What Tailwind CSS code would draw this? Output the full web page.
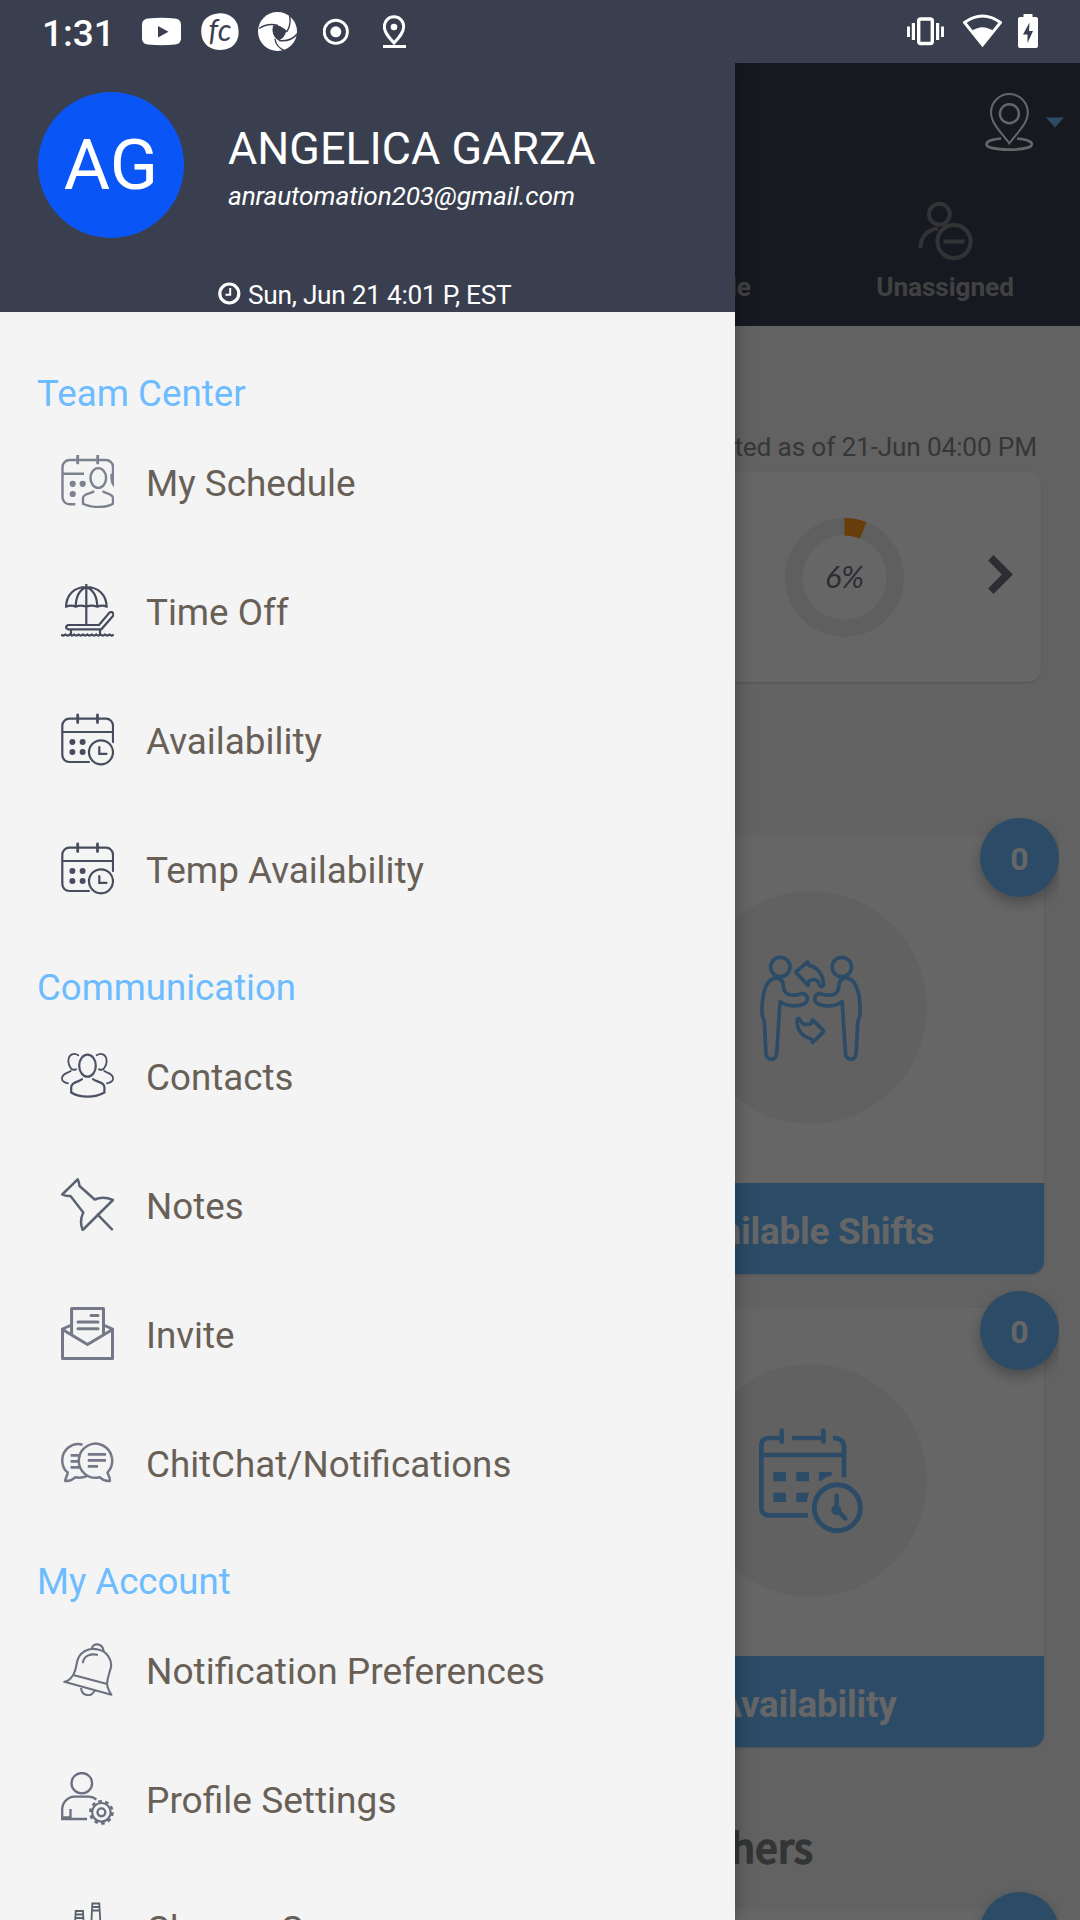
<!DOCTYPE html>
<html lang="en">
<head>
<meta charset="utf-8">
<title>Team Center</title>
<script src="https://cdn.jsdelivr.net/npm/@tailwindcss/browser@4"></script>
</head>
<body class="font-['Roboto',sans-serif]">
<svg class="hidden">
  <symbol id="calendar-clock" viewBox="0 0 53 53">
    <g fill="none" stroke="currentColor" stroke-width="2.200" stroke-linecap="round">
      <path d="M28 49H8.300a7 7 0 0 1-7-7V12.700a7 7 0 0 1 7-7H45a7 7 0 0 1 7 7V29M1.300 19H52"/>
      <path d="M16.700 2V9.500M36.500 2V9.500" stroke-width="2.800"/>
      <circle cx="40" cy="39.300" r="12"/>
      <path d="M38.300 34v6.800H45.500"/>
    </g>
    <g fill="currentColor"><circle cx="11.400" cy="29" r="3"/><circle cx="21.600" cy="29" r="3"/><circle cx="11.400" cy="39" r="3"/><circle cx="21.600" cy="39" r="3"/></g>
  </symbol>
</svg>
<div class="flex flex-col w-[1080px] h-[1920px] overflow-hidden bg-[#3a3f4f]">

  <!-- Status bar -->
  <div class="flex h-[63px] shrink-0 text-white">
    <span class="w-[100px] ml-[42px] text-[37px] leading-[67px] font-medium">1:31</span>
    <svg class="w-[39px] h-[63px]" viewBox="142 0 39 63"><path d="M148 18.500q13.500-1.500 27 0 5.500.5 6 5.500.5 7.500 0 15-.5 5-6 5.500-13.500 1.500-27 0-5.500-.5-6-5.500-.5-7.500 0-15 .5-5 6-5.500z" fill="currentColor"/><path d="M158 26v11.500l10.500-5.700z" fill="#3a3f4f"/></svg>
    <svg class="w-[38px] h-[63px] ml-5" viewBox="201 0 38 63"><path d="M218 13.500c9-1 16 3 19.500 11 2.500 9 1 17-6 22.500-7 4-16 4-22.500 0-7-5-8.500-12-7.500-20 1.500-8 8-13 16.500-13.500z" fill="currentColor"/><text x="208.500" y="41" font-family="Lato" font-style="italic" font-size="30" fill="#3a3f4f">fc</text></svg>
    <svg class="w-[39px] h-[63px] ml-[19px]" viewBox="258 0 39 63"><circle cx="277.500" cy="31.500" r="19.500" fill="currentColor"/><g fill="none" stroke="#3a3f4f" stroke-width="1.400"><path d="M259 28.500q9-6 19-3M289.500 15q2 10-3 17M297 34q-6 8-18 6.500M285 51q-9-4-10-12"/></g><path d="M273 25.500q7-1 13.500 5-2 8-8 10-8-5-5.500-15z" fill="#3a3f4f"/></svg>
    <svg class="w-[26px] h-[63px] ml-[26px]" viewBox="323 0 26 63"><circle cx="335.800" cy="31.800" r="11.600" fill="none" stroke="currentColor" stroke-width="2.900"/><circle cx="335.800" cy="31.800" r="5.500" fill="currentColor"/></svg>
    <svg class="w-[24px] h-[63px] ml-[34px]" viewBox="383 0 24 63"><path d="M394 43C388 36.500 384.300 32 384.300 26.500a9.700 9.700 0 0 1 19.400 0C403.700 32 400 36.500 394 43z" fill="none" stroke="currentColor" stroke-width="2.900"/><circle cx="394" cy="27" r="3.300" fill="currentColor"/><path d="M383 46.500h23" stroke="currentColor" stroke-width="3"/></svg>
    <svg class="w-[37px] h-[63px] ml-auto" viewBox="907 0 37 63"><g fill="none" stroke="currentColor"><rect x="918.700" y="19" width="13.600" height="24.500" rx="2" stroke-width="3.400"/><path d="M913.400 23v17M937.600 23v17" stroke-width="3.200"/><path d="M908.500 26.500v10.500M942.500 26.500v10.500" stroke-width="2.900"/></g></svg>
    <svg class="w-[39px] h-[63px] ml-[19px]" viewBox="963 0 39 63"><path d="M964.500 22.500q18-13 36 0L982.500 45z" fill="none" stroke="currentColor" stroke-width="2.900"/><path d="M972 31q10.500-7.500 21 0L982.500 45z" fill="currentColor"/></svg>
    <svg class="w-[20px] h-[63px] ml-4 mr-[42px]" viewBox="1018 0 20 63"><path d="M1023.500 14h9v3h3.500a2 2 0 0 1 2 2v27a2 2 0 0 1-2 2h-16a2 2 0 0 1-2-2V19a2 2 0 0 1 2-2h3.500z" fill="currentColor"/><path d="M1029.500 22.500l-6.500 12h4.500v8.500l5.500-12h-4z" fill="#3a3f4f"/></svg>
  </div>

  <div class="relative flex-1 overflow-hidden">
    <!-- Dashboard -->
    <div class="flex flex-col w-full h-full bg-[#f5f5f5] overflow-hidden">
      <div class="h-[263px] shrink-0 bg-[#3a3f50] pt-[30px]">
        <div class="flex justify-end items-center gap-[13px] pr-4">
          <svg class="w-12 h-[58px]" viewBox="985 93 48 58" fill="none" stroke="#fff"><path d="M1009.400 143.500C1003 134 991 124 991 112.500a18.400 18.400 0 0 1 36.800 0C1027.800 124 1016 134 1009.400 143.500z" stroke-width="2"/><circle cx="1009.400" cy="113.700" r="9.500" stroke-width="2.400"/><path d="M1001 138.500C992 139.200 986.500 141.500 986.500 144.200c0 3.300 10 5.400 22.700 5.400s22.700-2.100 22.700-5.400c0-2.700-5.500-5-14.900-5.700" stroke-width="2.700"/></svg>
          <svg class="w-[18px] h-[11px]" viewBox="0 0 18 11"><path d="M0 .5h18L9 10.500z" fill="#6cbcff"/></svg>
        </div>
        <div class="grid grid-cols-4 mt-[51px] text-[26.250px] leading-8 font-bold text-[#a2a3a6]">
          <div class="col-start-3 flex flex-col items-center"><div class="h-[58px]"></div><span class="mt-[11px] whitespace-nowrap">My Schedule</span></div>
          <div class="flex flex-col items-center">
            <svg class="w-[55px] h-[58px]" viewBox="918 202 55 58" fill="none" stroke="#808084" stroke-width="4"><circle cx="939.400" cy="214.200" r="10.400"/><path d="M920.500 248c0-11 7-18.500 17.500-19.500"/><circle cx="954" cy="241.500" r="16.600"/><path d="M943.500 241.500h21"/></svg>
            <span class="mt-[11px] tracking-[-0.1px]">Unassigned</span>
          </div>
        </div>
      </div>

      <div class="mt-[105px] px-[43px] text-right text-[26.250px] leading-8 tracking-[-0.17px] text-[#88898a]">Updated as of 21-Jun 04:00 PM</div>

      <div class="mt-[9px] mx-[39px] h-[210px] shrink-0 rounded-[13px] bg-white shadow-[0_1px_2px_rgba(0,0,0,0.15)] flex items-center justify-end pr-7">
        <svg class="w-[119px] h-[119px]" viewBox="-59.500 -59.500 119 119"><circle r="50.750" fill="none" stroke="#eee" stroke-width="17.500"/><path d="M0-50.750A50.750 50.750 0 0 1 18.680-47.190" fill="none" stroke="#ff9a1c" stroke-width="17.500"/><text y="10" text-anchor="middle" font-family="Lato" font-style="italic" font-size="30.500" fill="#717280">6%</text></svg>
        <svg class="w-[25px] h-[39px] ml-[84px] mb-[6px]" viewBox="864 405 74 116"><path d="M880 405l58 58-58 58-16-16 41-42-41-42z" fill="#717280"/></svg>
      </div>

      <div class="mt-[136px] mr-[21px] flex justify-end overflow-hidden shrink-0">
        <div class="flex flex-col w-[492px]">
          <div class="relative pt-[17px] pr-[15px] h-[473px]">
            <div class="flex flex-col items-center h-[439px] rounded-[13px] bg-white shadow-[0_1px_2px_rgba(0,0,0,0.15)] overflow-hidden">
              <div class="mt-[56px] ml-[9px] w-[233px] h-[233px] shrink-0 rounded-full bg-[#f3f3f3] flex items-center justify-center">
                <svg class="w-[102px] h-[106px] ml-px" viewBox="120 492 306 318" fill="none" stroke="#6cbcff" stroke-width="11" stroke-linejoin="round" stroke-linecap="round">
                  <g id="person"><circle cx="181" cy="528" r="29"/><path d="M163 563C133 566 126 622 126 660q0 18 7 30l5 98c2 22 30 22 32 0l10-156c22 16 60 16 76 4 12-12 4-30-12-28-26 8-50 8-54-20 0-18-8-28-27-28z"/></g>
                  <use href="#person" transform="translate(546.500 0) scale(-1 1)"/>
                  <path d="M263 513l4 10c28 6 44 30 43 60-4 6-10 4-12-2-4-16-14-18-30-12l-4 14-34-36c-4-4-2-6 2-8z"/>
                  <path d="M278 754l-4-10c-28-8-44-28-43-58 4-6 8-4 10 2 6 14 14 14 32 10l4-12 31 30c3 3 3 6 0 9z"/>
                </svg>
              </div>
              <div class="mt-auto h-[91px] w-full shrink-0 bg-[#6cbcff] text-white text-center font-bold text-[36.750px] leading-[97px] pl-[3px] tracking-[-0.2px]">Available Shifts</div>
            </div>
            <div class="absolute top-0 right-0 w-[79px] h-[79px] rounded-full bg-[#6cbcff] text-white text-center font-bold text-[32px] leading-[82px] shadow-[0_6px_14px_rgba(0,0,0,0.28)]">0</div>
          </div>
          <div class="relative pt-[17px] pr-[15px] h-[473px]">
            <div class="flex flex-col items-center h-[439px] rounded-[13px] bg-white shadow-[0_1px_2px_rgba(0,0,0,0.15)] overflow-hidden">
              <div class="mt-[56px] ml-[9px] w-[233px] h-[233px] shrink-0 rounded-full bg-[#f3f3f3] flex items-center justify-center">
                <svg class="w-[105px] h-[106px]" viewBox="115 202 315 318" fill="none" stroke="#6cbcff" stroke-width="14" stroke-linecap="round">
                  <path d="M185 232H149q-24 0-24 24V440q0 24 24 24H265M217 232H305M340 232q33 0 33 28V350M125 283H373" stroke-linecap="butt"/>
                  <path d="M186 210V243M311 210V243"/>
                  <path d="M161 334h38v28H161zM230 334h38v28H230zM298 334h38v11q-20 4-34 17h-4zM161 396h38v28H161zM230 396h38q-5 15-7 28H230z" fill="#6cbcff" stroke="none"/>
                  <circle cx="353" cy="441" r="69" stroke-width="15"/>
                  <path d="M351 405V447l26 26"/><circle cx="350" cy="448" r="8"/>
                </svg>
              </div>
              <div class="mt-auto h-[91px] w-full shrink-0 bg-[#6cbcff] text-white text-center font-bold text-[36.750px] leading-[97px] pl-[3px] tracking-[-0.2px]">Availability</div>
            </div>
            <div class="absolute top-0 right-0 w-[79px] h-[79px] rounded-full bg-[#6cbcff] text-white text-center font-bold text-[32px] leading-[82px] shadow-[0_6px_14px_rgba(0,0,0,0.28)]">0</div>
          </div>
          <div class="h-[128px] pt-[57px] pr-[246px] text-right font-['Noto_Sans_CJK_SC',sans-serif] font-medium text-[40px] leading-[50px] text-[#808384] [-webkit-text-stroke:1.400px_#808384]">Others</div>
          <div class="relative pt-[17px] pr-[15px] h-[100px]">
            <div class="h-full rounded-[13px] bg-white"></div>
            <div class="absolute top-0 right-0 w-[79px] h-[79px] rounded-full bg-[#6cbcff] shadow-[0_6px_14px_rgba(0,0,0,0.28)]"></div>
          </div>
        </div>
      </div>
    </div>

    <div class="absolute inset-0 bg-black/60"></div>

    <!-- Navigation drawer -->
    <div class="absolute inset-y-0 left-0 w-[735px] bg-[#f4f4f4] shadow-[0_0_18px_rgba(0,0,0,0.3)]">
      <div class="h-[249px] bg-[#3a3f4f] text-white pt-[29px]">
        <div class="flex h-[146px] pl-[38px]">
          <div class="w-[146px] h-[146px] rounded-full bg-[#0a55f6] text-center text-[71px] leading-[145px]">AG</div>
          <div class="ml-11 pt-[31px]">
            <div class="text-[44.900px] leading-[52px]">ANGELICA GARZA</div>
            <div class="text-[26.250px] leading-[42px] italic tracking-[-0.17px]">anrautomation203@gmail.com</div>
          </div>
        </div>
        <div class="flex items-center h-8 mt-[41px] pl-[218px]">
          <svg class="w-[23px] h-[23px] mb-[3px]" viewBox="0 0 23 23" fill="none" stroke="#fff"><circle cx="11.300" cy="11.500" r="9.500" stroke-width="3.200"/><path d="M12.200 6v6.800H7.500" stroke-width="2"/></svg>
          <span class="ml-[7px] text-[26.250px] leading-8 tracking-[-0.27px]">Sun, Jun 21 4:01 P, EST</span>
        </div>
      </div>

      <div class="pt-[56px] h-[1608px] overflow-hidden text-[36.750px] text-[#686057]">
        <div class="mb-[27px]">
          <div class="h-[51px] leading-[51px] pl-[37px] text-[#6cbcff]">Team Center</div>
          <div class="flex items-center h-[129px] pl-[61px] gap-8">
            <svg class="w-[53px] h-[53px] mb-1 text-[#7c8190]" viewBox="0 0 53 53"><g fill="none" stroke="currentColor" stroke-width="2.400"><path d="M14.300 49.300H8.500a7 7 0 0 1-7-7V12a7 7 0 0 1 7-7H45a7 7 0 0 1 7 7V29Q50.500 27 50.500 18.700M1.500 18.700H23"/><path d="M16.700 0V9.300M36.700 0V9.300" stroke-width="2.800"/><ellipse cx="37.300" cy="23" rx="7.800" ry="9.900"/><path d="M33 36C31 39 22.300 38 22 43v5.700C30 53 45 53 52 48.700V43C51.500 38 44 39 41.700 36"/></g><g fill="currentColor"><circle cx="11.700" cy="28.800" r="3.100"/><circle cx="21.700" cy="28.800" r="3.100"/><circle cx="11.700" cy="39" r="3.100"/></g></svg>
            <span class="text-[36.900px]">My Schedule</span>
          </div>
          <div class="flex items-center h-[129px] pl-[61px] gap-8">
            <svg class="w-[53px] h-[53px] mb-1" viewBox="0 0 53 53" fill="none" stroke="#454b5d" stroke-width="2.200"><path d="M25.300 0V41M5 23.700C5 10 14 3 25.300 3s20.400 7 20.400 20.700M5 22.700q5-2 9.700 0 5-2 10.600 0 5-2 11 0 5-2 9.400 0M14.700 23.700C14.700 13 18 6 25.300 3c7.500 3 11 10 11 20.700"/><path d="M7 41H38L48.500 28.500q2.500-1.500 4 1.500 0 1.500-1 2.500L40.300 45.300H7q-4-2 0-4.300zM10 45v6M39 45v6"/><path d="M0 50.500q2.200 2 4.400 0 2.200 2 4.400 0 2.200 2 4.400 0 2.200 2 4.400 0 2.200 2 4.400 0 2.200 2 4.400 0 2.200 2 4.400 0 2.200 2 4.400 0 2.200 2 4.400 0 2.200 2 4.400 0 2.200 2 4.400 0 2.200 2 4.400 0"/></svg>
            <span>Time Off</span>
          </div>
          <div class="flex items-center h-[129px] pl-[61px] gap-8">
            <svg class="w-[53px] h-[53px] mb-1 text-[#484d5e]"><use href="#calendar-clock"/></svg>
            <span class="text-[36.900px]">Availability</span>
          </div>
          <div class="flex items-center h-[129px] pl-[61px] gap-8">
            <svg class="w-[53px] h-[53px] mb-1 text-[#484d5e]"><use href="#calendar-clock"/></svg>
            <span class="text-[36.900px]">Temp Availability</span>
          </div>
        </div>

        <div class="mb-[27px]">
          <div class="h-[51px] leading-[51px] pl-[37px] text-[#6cbcff] text-[36.600px]">Communication</div>
          <div class="flex items-center h-[129px] pl-[61px] gap-8">
            <svg class="w-[53px] h-[53px] mb-1" viewBox="0 0 53 53" fill="none" stroke="#4c5163" stroke-width="2.200" stroke-linecap="round"><ellipse cx="26.500" cy="16.700" rx="8.300" ry="11"/><path d="M21 30.200C19 33 11 32 10.200 38v5.500C19 49 34 49 43.400 43.500V38C43 32 34 33 32 30.200"/><g id="side" stroke-width="1.800"><path d="M17.300 6.300C14 4 9.500 4.500 8 8.500c-1 3-.5 7.500 1.700 10.500 1 1.500 3.500 2 5.300 1.300M9.700 22C7 24 2.500 24 1.200 28c-.8 3.500 1 5.300 5.800 6.300"/></g><use href="#side" transform="translate(53 0) scale(-1 1)"/></svg>
            <span>Contacts</span>
          </div>
          <div class="flex items-center h-[129px] pl-[61px] gap-8">
            <svg class="w-[53px] h-[53px] mb-1" viewBox="0 0 53 53" fill="none" stroke="#5b6272" stroke-width="2.500" stroke-linejoin="round" stroke-linecap="round"><path d="M16.700 1.300Q18 4 18.500 8L33.700 21.500Q42 18 52 22L21.700 52Q18 43 22.300 34.500L9.500 18Q5 18.500 1.200 16.500zM36.700 36.700L51 51.300"/></svg>
            <span>Notes</span>
          </div>
          <div class="flex items-center h-[129px] pl-[61px] gap-8">
            <svg class="w-[53px] h-[53px] mb-1" viewBox="0 0 53 53" fill="none" stroke="#757886" stroke-width="3" stroke-linejoin="round"><path d="M10.600 27V1.500H42.500V27M10.600 18L1.500 22V51.500H51.500V22L42.500 18M1.500 22.500L26.500 37.500 51.500 22.500"/><path d="M30 8.500H37M17 15H37M17 21.700H37" stroke-linecap="round"/></svg>
            <span>Invite</span>
          </div>
          <div class="flex items-center h-[129px] pl-[61px] gap-8">
            <svg class="w-[53px] h-[53px] mb-1" viewBox="0 0 53 53" fill="none" stroke="#757886" stroke-width="2.500" stroke-linejoin="round"><path d="M46.500 36.500A16.700 17 0 1 0 38.500 41.200C41.500 44 45 45.500 48.800 45 49.500 43 48 40 46.500 36.500z"/><path d="M21.600 8.700C11 5.500 1 14 1.200 25 1.500 30 4 34.500 6.800 36.500 6 40 4.500 42 4.200 45 8 45.500 11.500 44 14.500 41.200Q20 42.500 26 40"/><path d="M9.600 19.300h10M9.600 25.300h9M9.600 31.300h10M26.800 18.300H45M26.800 24.300H45M26.800 30.300H37" stroke-width="2.800"/></svg>
            <span>ChitChat/Notifications</span>
          </div>
        </div>

        <div>
          <div class="h-[51px] leading-[51px] pl-[37px] text-[#6cbcff] text-[36.600px]">My Account</div>
          <div class="flex items-center h-[129px] pl-[61px] gap-8">
            <svg class="w-[53px] h-[53px] mb-1" viewBox="0 0 53 53" fill="none" stroke="#6c7180" stroke-width="2.100" stroke-linejoin="round" stroke-linecap="round"><path d="M12.200 32C17 24 14 17 20 11 25 6 32 5 37 6.500 46 8 51 17 50 24 48.500 30 46 36 46.100 41zM12.200 32Q8 38.500 3.300 38.700L50.400 51.700Q46.500 46 46.100 41M31 5C32 0 41-.5 42.600 7.500M20 43.700C20 53.500 31 55 33.600 47.200M22 19.300C23 13 29 10.500 36 11.700"/></svg>
            <span class="text-[37.100px]">Notification Preferences</span>
          </div>
          <div class="flex items-center h-[129px] pl-[61px] gap-8">
            <svg class="w-[53px] h-[53px] mb-1" viewBox="0 0 53 53" fill="none" stroke="#6a7080" stroke-width="2.300"><ellipse cx="20.800" cy="11.200" rx="10.300" ry="10.200"/><path d="M35.400 27.500Q32 24.700 28 24.700H13.500C6 25 1.200 31 1.200 38V47H26M9.500 37V45.500H1.500"/><circle cx="40.400" cy="40.300" r="9.300" stroke-width="2.200"/><circle cx="40.400" cy="40.300" r="11" stroke-width="2.800" stroke-dasharray="3.600 3.310"/><circle cx="40.400" cy="40.300" r="3.900" stroke-width="2.400"/></svg>
            <span class="text-[37.100px]">Profile Settings</span>
          </div>
          <div class="flex items-center h-[129px] pl-[61px] gap-8">
            <svg class="w-[53px] h-[53px] mb-1" viewBox="0 0 53 53" fill="none" stroke="#5c6170" stroke-width="1.800"><path d="M12.500 51L14.700 10H22L24 51M29 51L31.300 2.500H38.300L41 51M14.500 13.500H22.500M14.300 17H22.500M31 6H38.500M31 9.500H38.500"/></svg>
            <span>Change Company</span>
          </div>
        </div>
      </div>
    </div>
  </div>
</div>
</body>
</html>
